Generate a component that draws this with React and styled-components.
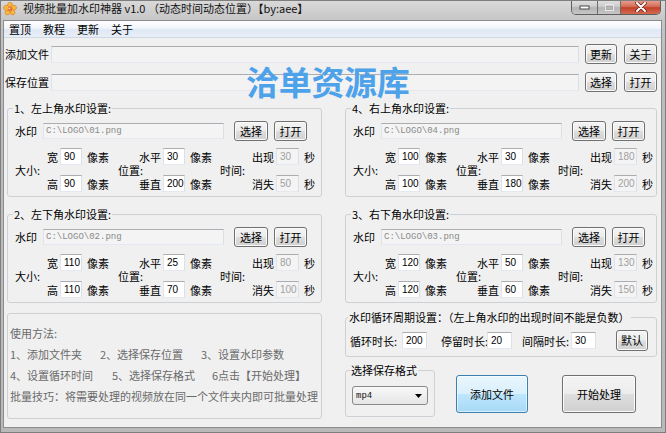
import React from "react";
import styled, { createGlobalStyle } from "styled-components";

const GlobalStyle = createGlobalStyle`
  html, body { margin: 0; padding: 0; background: #fff; }
  body {
    font-family: "Noto Sans CJK SC", "Liberation Sans", sans-serif;
    font-size: 11px;
    color: #000;
  }
  * { box-sizing: border-box; }
`;

const CJK = `"Noto Sans CJK SC", "Liberation Sans", sans-serif`;

/* ---------- window chrome ---------- */

const Window = styled.div`
  position: relative;
  width: 666px;
  height: 433px;
  display: flex;
  flex-direction: column;
  border: 1px solid #7e7e7e;
  background: linear-gradient(to bottom, #d9d9d9 0px, #c6c6c6 19px, #bdbdbd 60px, #b9b9b9 100%);
  overflow: hidden;
`;

const TitleBar = styled.div`
  height: 19px;
  flex: none;
  display: flex;
  align-items: flex-start;
`;

const TitleIcon = styled.svg`
  flex: none;
  margin: 1px 0 0 2px;
`;

const TitleText = styled.div`
  margin-left: 6px;
  font-size: 11px;
  line-height: 15px;
  color: #111;
  white-space: nowrap;
`;

const Controls = styled.div`
  margin-left: auto;
  margin-right: 4px;
  margin-top: -1px;
  display: flex;
  height: 15px;
  border: 1px solid #5f5f5f;
  border-top: none;
  border-radius: 0 0 5px 5px;
  overflow: hidden;
`;

const CtrlButton = styled.div`
  width: ${(p) => p.$w}px;
  display: flex;
  align-items: center;
  justify-content: center;
  background: ${(p) =>
    p.$close
      ? "linear-gradient(to bottom, #e7a595 0%, #d5705a 45%, #c4412b 55%, #d36a52 100%)"
      : "linear-gradient(to bottom, #e2e2e2 0%, #cdcdcd 45%, #b4b4b4 55%, #c6c6c6 100%)"};
  & + & {
    border-left: 1px solid #6c6c6c;
  }
`;

const Body = styled.div`
  flex: 1;
  display: flex;
  flex-direction: column;
  margin: 0 3px 4px 2px;
  border: 1px solid #8c8c8c;
`;

const MenuBar = styled.div`
  height: 17px;
  flex: none;
  display: flex;
  align-items: center;
  background: linear-gradient(to bottom, #fdfdfe 0%, #f1f5fb 45%, #dfe8f5 55%, #e8eef8 100%);
  border-bottom: 1px solid #cfd8e4;
`;

const MenuItem = styled.span`
  padding: 0 6px 0 5px;
  line-height: 15px;
  & + & {
    margin-left: 1px;
  }
`;

const Client = styled.div`
  flex: 1;
  background: #f0f0f0;
  padding: 6px 4px 0 1px;
  display: flex;
  flex-direction: column;
`;

const Watermark = styled.div`
  position: absolute;
  left: 245px;
  top: 64px;
  font-family: ${CJK};
  font-weight: 700;
  font-size: 33px;
  line-height: 1;
  color: #4ea2ea;
  letter-spacing: -0.3px;
  pointer-events: none;
  white-space: nowrap;
`;

/* ---------- common controls ---------- */

const Button = styled.button`
  flex: none;
  width: ${(p) => p.$w}px;
  height: ${(p) => p.$h ?? 20}px;
  margin: ${(p) => p.$mt ?? 0}px 0 0 ${(p) => p.$ml ?? 0}px;
  padding: 0;
  font-family: ${CJK};
  font-size: 11px;
  line-height: 1;
  color: #000;
  border: 1px solid ${(p) => (p.$hot ? "#3c7fb1" : "#707070")};
  border-radius: 3px;
  background: ${(p) =>
    p.$hot
      ? "linear-gradient(to bottom, #eaf6fd 0%, #d9f0fc 49%, #bee6fd 51%, #a7d9f5 100%)"
      : "linear-gradient(to bottom, #f4f4f4 0%, #ececec 49%, #dedede 51%, #d0d0d0 100%)"};
  box-shadow: inset 0 0 0 1px ${(p) => (p.$hot ? "rgba(255,255,255,0.55)" : "#fbfbfb")};
`;

const TextBox = styled.input`
  flex: none;
  width: ${(p) => p.$w}px;
  height: ${(p) => p.$h ?? 17}px;
  margin: 0 0 0 ${(p) => p.$ml ?? 0}px;
  padding: 0 0 0 ${(p) => (p.$mono ? 2 : 3)}px;
  border: 1px solid;
  border-color: #abadb3 #dbdfe6 #e3e9ef #e2e3ea;
  border-radius: 0;
  outline: none;
  background: ${(p) => (p.$dim ? "#f4f4f4" : "#fff")};
  color: ${(p) => (p.$mono ? "#8a8a8a" : p.$dim ? "#a0a0a0" : "#000")};
  font-family: ${(p) => (p.$mono ? `"Liberation Mono", monospace` : `"Liberation Sans", sans-serif`)};
  font-size: ${(p) => (p.$mono ? 9 : 10)}px;
`;

const Text = styled.span`
  flex: none;
  white-space: nowrap;
  line-height: 14px;
  width: ${(p) => (p.$w ? `${p.$w}px` : "auto")};
  margin-left: ${(p) => p.$ml ?? 0}px;
`;

/* ---------- top file rows ---------- */

const FileRows = styled.div`
  display: flex;
  flex-direction: column;
  gap: 8px;
`;

const FileRow = styled.div`
  display: flex;
  align-items: center;
  height: 20px;
`;

const WideBox = styled(TextBox)`
  background: #f3f3f3;
`;

/* ---------- group boxes ---------- */

const Columns = styled.div`
  display: flex;
  gap: 23px;
  margin: 9px 0 0 2px;
`;

const Column = styled.div`
  width: ${(p) => p.$w}px;
  flex: none;
  display: flex;
  flex-direction: column;
`;

const GroupBox = styled.fieldset`
  margin: ${(p) => p.$mt ?? 0}px 0 0 0;
  min-width: 0;
  width: ${(p) => (p.$w ? `${p.$w}px` : "auto")};
  flex: none;
  border: 1px solid #cdd1d6;
  border-radius: 3px;
  padding: ${(p) => p.$pt}px 3px ${(p) => p.$pb}px ${(p) => p.$pl}px;
`;

const Legend = styled.legend`
  padding: 0 1px;
  margin-left: -2px;
  font-size: 11px;
  line-height: 14px;
  height: 14px;
  white-space: nowrap;
`;

const WmRow = styled.div`
  display: flex;
  align-items: center;
  height: 20px;
`;

const SizeBlock = styled.div`
  display: flex;
  margin-top: 7px;
`;

const Section = styled.div`
  display: flex;
  align-items: center;
  margin-left: ${(p) => p.$gap}px;
`;

const SectionRows = styled.div`
  display: flex;
  flex-direction: column;
  gap: 10px;
`;

const FieldRow = styled.div`
  display: flex;
  align-items: center;
  height: 17px;
`;

const FieldName = styled.span`
  margin-right: 2px;
  white-space: nowrap;
  line-height: 14px;
`;

/* ---------- help box ---------- */

const HelpBox = styled.div`
  margin-top: 10px;
  height: 106px;
  border: 1px solid #cdd1d6;
  border-radius: 3px;
  padding: 9px 2px 0;
  color: #6a6a6a;
`;

const HelpLine = styled.div`
  display: flex;
  height: 21px;
  line-height: 21px;
  white-space: nowrap;
`;

const Step = styled.span`
  flex: none;
  width: ${(p) => (p.$w ? `${p.$w}px` : "auto")};
`;

/* ---------- bottom right ---------- */

const CycleRow = styled.div`
  display: flex;
  align-items: center;
  height: 21px;
`;

const BottomRow = styled.div`
  display: flex;
  align-items: flex-start;
  margin-top: 6px;
`;

const Select = styled.div`
  width: 76px;
  height: 19px;
  display: flex;
  align-items: center;
  justify-content: space-between;
  padding: 0 5px 0 3px;
  border: 1px solid #8a8a8a;
  border-radius: 3px;
  background: linear-gradient(to bottom, #f8f8f8 0%, #efefef 50%, #e6e6e6 100%);
  font-family: "Liberation Mono", monospace;
  font-size: 9px;
  color: #111;
`;

/* ---------- pieces ---------- */

function AppIcon() {
  const petals = [0, 72, 144, 216, 288];
  return (
    <TitleIcon width="14" height="14" viewBox="0 0 14 14">
      {petals.map((a) => (
        <ellipse
          key={a}
          cx="7"
          cy="3.6"
          rx="2.6"
          ry="3.4"
          fill="#f4b740"
          stroke="#d9822b"
          strokeWidth="0.6"
          transform={`rotate(${a} 7 7)`}
        />
      ))}
      <circle cx="7" cy="7" r="2.4" fill="#e86f3a" />
      <circle cx="6.4" cy="6.4" r="0.9" fill="#fbe08a" />
    </TitleIcon>
  );
}

function WindowControls() {
  return (
    <Controls>
      <CtrlButton $w={25}>
        <svg width="11" height="6" viewBox="0 0 11 6">
          <rect x="1" y="2" width="9" height="3" fill="#fff" stroke="#4a4a4a" strokeWidth="1" />
        </svg>
      </CtrlButton>
      <CtrlButton $w={23}>
        <svg width="11" height="9" viewBox="0 0 11 9">
          <rect x="1.5" y="1.5" width="8" height="6" fill="none" stroke="#e9e9e9" strokeWidth="1" />
          <rect x="2.5" y="3.5" width="6" height="3" fill="none" stroke="#a9a9a9" strokeWidth="1" />
        </svg>
      </CtrlButton>
      <CtrlButton $w={40} $close>
        <svg width="12" height="10" viewBox="0 0 12 10">
          <path d="M2 1 L10 9 M10 1 L2 9" stroke="#6b1d12" strokeWidth="3.4" strokeLinecap="round" />
          <path d="M2 1 L10 9 M10 1 L2 9" stroke="#fff" strokeWidth="2" strokeLinecap="round" />
        </svg>
      </CtrlButton>
    </Controls>
  );
}

function WatermarkGroup({ g, mt }) {
  return (
    <GroupBox $mt={mt} $pt={6} $pb={4} $pl={7}>
      <Legend>{g.title}</Legend>
      <WmRow>
        <Text>水印</Text>
        <TextBox $w={181} $h={16} $ml={6} $mono $dim readOnly value={g.path} />
        <Button $w={34} $ml={10}>选择</Button>
        <Button $w={33} $ml={6}>打开</Button>
      </WmRow>
      <SizeBlock>
        <Section $gap={0}>
          <Text $w={32}>大小:</Text>
          <SectionRows>
            <FieldRow>
              <FieldName>宽</FieldName>
              <TextBox $w={22} readOnly value={g.w} />
              <Text $ml={5}>像素</Text>
            </FieldRow>
            <FieldRow>
              <FieldName>高</FieldName>
              <TextBox $w={22} readOnly value={g.h} />
              <Text $ml={5}>像素</Text>
            </FieldRow>
          </SectionRows>
        </Section>
        <Section $gap={9}>
          <Text $w={21}>位置:</Text>
          <SectionRows>
            <FieldRow>
              <FieldName>水平</FieldName>
              <TextBox $w={22} readOnly value={g.x} />
              <Text $ml={5}>像素</Text>
            </FieldRow>
            <FieldRow>
              <FieldName>垂直</FieldName>
              <TextBox $w={22} readOnly value={g.y} />
              <Text $ml={5}>像素</Text>
            </FieldRow>
          </SectionRows>
        </Section>
        <Section $gap={8}>
          <Text $w={32}>时间:</Text>
          <SectionRows>
            <FieldRow>
              <FieldName>出现</FieldName>
              <TextBox $w={23} $dim readOnly value={g.show} />
              <Text $ml={5}>秒</Text>
            </FieldRow>
            <FieldRow>
              <FieldName>消失</FieldName>
              <TextBox $w={23} $dim readOnly value={g.hide} />
              <Text $ml={5}>秒</Text>
            </FieldRow>
          </SectionRows>
        </Section>
      </SizeBlock>
    </GroupBox>
  );
}

const groups = {
  topLeft: { title: "1、左上角水印设置:", path: "C:\\LOGO\\01.png", w: 90, h: 90, x: 30, y: 200, show: 30, hide: 50 },
  bottomLeft: { title: "2、左下角水印设置:", path: "C:\\LOGO\\02.png", w: 110, h: 110, x: 25, y: 70, show: 80, hide: 100 },
  topRight: { title: "4、右上角水印设置:", path: "C:\\LOGO\\04.png", w: 100, h: 100, x: 30, y: 180, show: 180, hide: 200 },
  bottomRight: { title: "3、右下角水印设置:", path: "C:\\LOGO\\03.png", w: 120, h: 120, x: 50, y: 60, show: 130, hide: 150 },
};

export default function App() {
  return (
    <>
      <GlobalStyle />
      <Window>
        <TitleBar>
          <AppIcon />
          <TitleText>视频批量加水印神器 v1.0 （动态时间动态位置）【by:aee】</TitleText>
          <WindowControls />
        </TitleBar>
        <Body>
          <MenuBar>
            <MenuItem>置顶</MenuItem>
            <MenuItem>教程</MenuItem>
            <MenuItem>更新</MenuItem>
            <MenuItem>关于</MenuItem>
          </MenuBar>
          <Client>
            <FileRows>
              <FileRow>
                <Text $w={46}>添加文件</Text>
                <WideBox $w={528} readOnly value="" />
                <Button $w={32} $ml={6}>更新</Button>
                <Button $w={33} $ml={7}>关于</Button>
              </FileRow>
              <FileRow>
                <Text $w={46}>保存位置</Text>
                <WideBox $w={528} readOnly value="" />
                <Button $w={32} $ml={6}>选择</Button>
                <Button $w={33} $ml={7}>打开</Button>
              </FileRow>
            </FileRows>

            <Columns>
              <Column $w={315}>
                <WatermarkGroup g={groups.topLeft} />
                <WatermarkGroup g={groups.bottomLeft} mt={10} />
                <HelpBox>
                  <HelpLine>使用方法:</HelpLine>
                  <HelpLine>
                    <Step $w={90}>1、添加文件夹</Step>
                    <Step $w={101}>2、选择保存位置</Step>
                    <Step>3、设置水印参数</Step>
                  </HelpLine>
                  <HelpLine>
                    <Step $w={102}>4、设置循环时间</Step>
                    <Step $w={100}>5、选择保存格式</Step>
                    <Step>6点击【开始处理】</Step>
                  </HelpLine>
                  <HelpLine>批量技巧：将需要处理的视频放在同一个文件夹内即可批量处理</HelpLine>
                </HelpBox>
              </Column>

              <Column $w={312}>
                <WatermarkGroup g={groups.topRight} />
                <WatermarkGroup g={groups.bottomRight} mt={10} />
                <GroupBox $mt={7} $pt={6} $pb={5} $pl={4}>
                  <Legend>水印循环周期设置：（左上角水印的出现时间不能是负数）</Legend>
                  <CycleRow>
                    <Text $w={52}>循环时长:</Text>
                    <TextBox $w={25} readOnly value="200" />
                    <Text $w={46} $ml={14}>停留时长:</Text>
                    <TextBox $w={25} readOnly value="20" />
                    <Text $w={49} $ml={10}>间隔时长:</Text>
                    <TextBox $w={25} readOnly value="30" />
                    <Button $w={32} $h={21} $ml={20}>默认</Button>
                  </CycleRow>
                </GroupBox>
                <BottomRow>
                  <GroupBox $w={90} $pt={9} $pb={11} $pl={6}>
                    <Legend>选择保存格式</Legend>
                    <Select>
                      <span>mp4</span>
                      <svg width="7" height="4" viewBox="0 0 7 4">
                        <path d="M0 0 H7 L3.5 4 Z" fill="#000" />
                      </svg>
                    </Select>
                  </GroupBox>
                  <Button $w={72} $h={38} $ml={21} $mt={12} $hot>添加文件</Button>
                  <Button $w={74} $h={38} $ml={34} $mt={12}>开始处理</Button>
                </BottomRow>
              </Column>
            </Columns>
          </Client>
        </Body>
        <Watermark>洽单资源库</Watermark>
      </Window>
    </>
  );
}
